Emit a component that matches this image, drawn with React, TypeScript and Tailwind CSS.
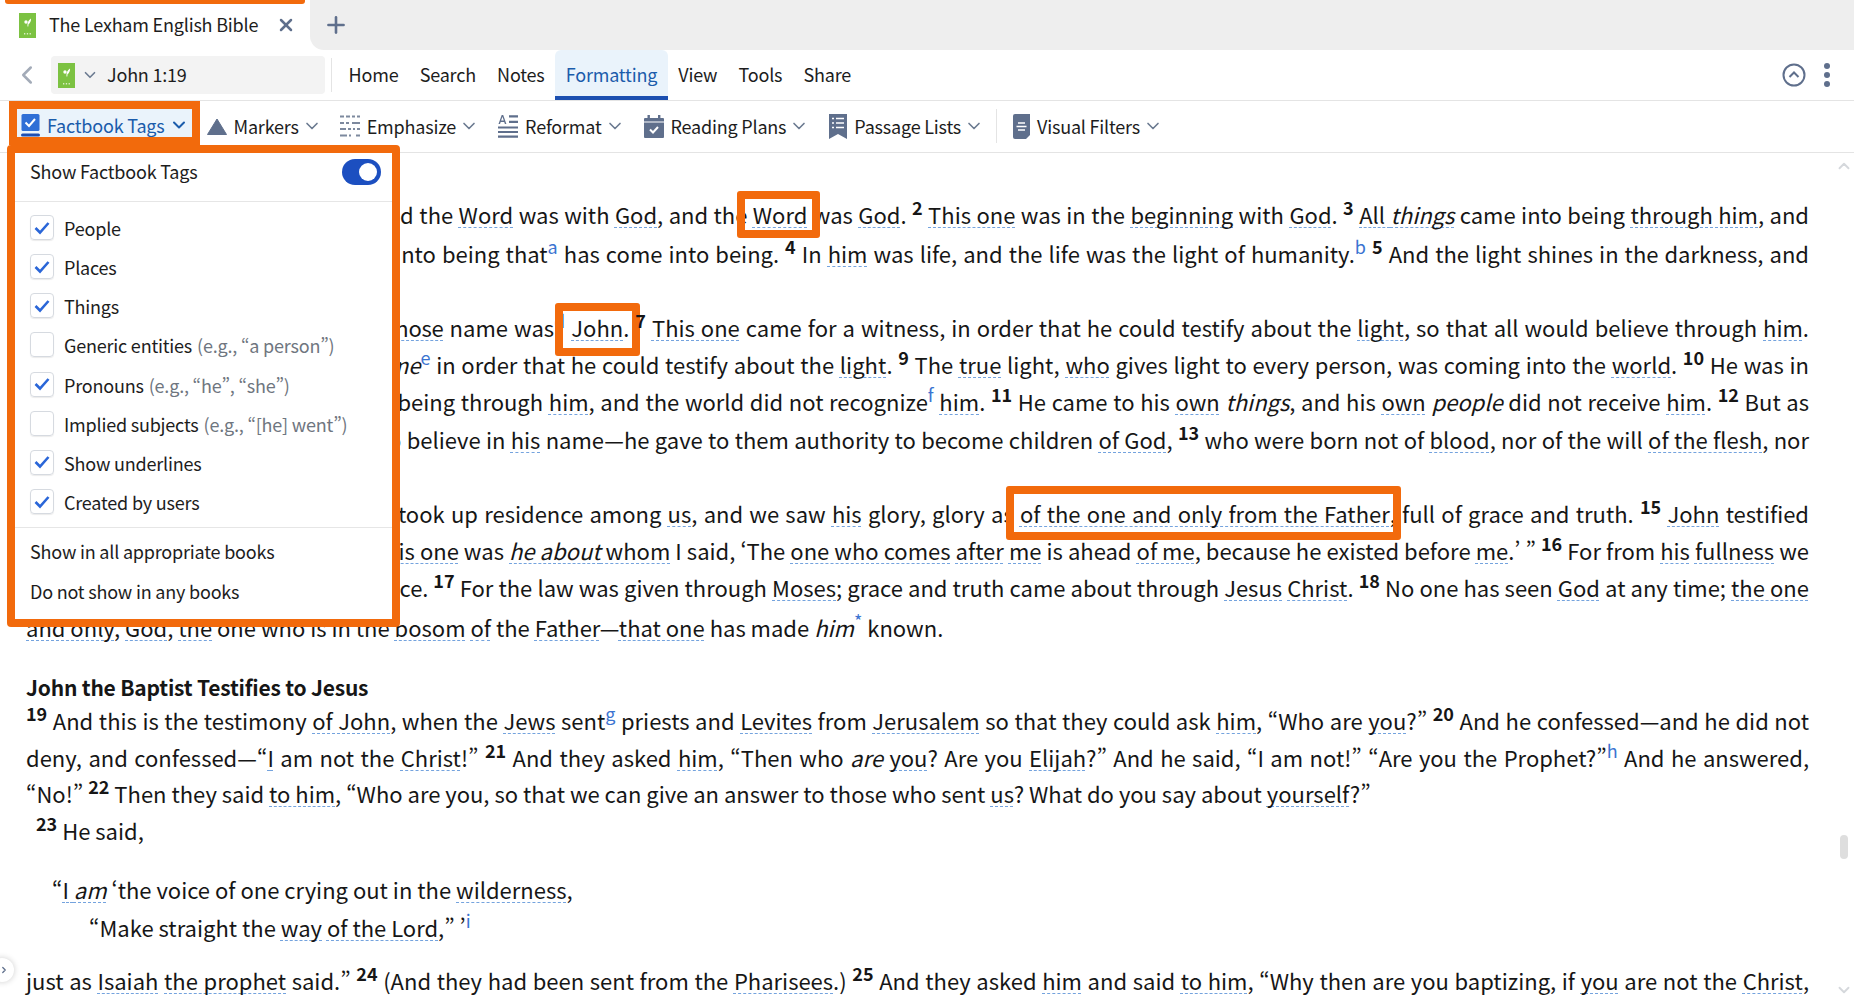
import type { ReactNode } from "react";
import { ChevronDown, ChevronLeft, ChevronRight, ChevronUp, Plus, X } from "lucide-react";

const ICON = "#5f6f8c";

// small markup for the bible text: {underlined} ^verse^ ~footnote~ *italic*
function rich(src: string): ReactNode[] {
  const parts = src.split(/(\{[^}]*\}|\^[^^]*\^|~[^~]*~|\*[^*]+\*)/);
  return parts.map((p, i) => {
    if (!p) return null;
    if (p[0] === "{")
      return (
        <span
          key={i}
          className="underline decoration-dashed decoration-1 decoration-[#74a3de] underline-offset-[3px] [text-decoration-skip-ink:none]"
        >
          {rich(p.slice(1, -1))}
        </span>
      );
    if (p[0] === "^")
      return (
        <sup key={i} className="text-[18px] font-bold tracking-normal">
          {p.slice(1, -1)}
        </sup>
      );
    if (p[0] === "~")
      return (
        <sup key={i} className="text-[18px] text-[#3b74d1]">
          {p.slice(1, -1)}
        </sup>
      );
    if (p[0] === "*" && p.length > 2) return <i key={i}>{p.slice(1, -1)}</i>;
    return p;
  });
}

function Line({ children, className = "" }: { children: ReactNode; className?: string }) {
  return (
    <div className={`h-[37px] leading-[37px] text-justify [text-align-last:justify] ${className}`}>{children}</div>
  );
}

function Plain({ children, className = "" }: { children: ReactNode; className?: string }) {
  return <div className={`h-[37px] leading-[37px] ${className}`}>{children}</div>;
}

// orange callout drawn around a phrase of the text
function Callout({ children, box }: { children: ReactNode; box: string }) {
  return (
    <span className="relative">
      {children}
      <span className={`absolute rounded-[3px] border-[8px] border-[#f26a0c] ${box}`} />
    </span>
  );
}

function Logo() {
  return (
    <svg width="17" height="25" viewBox="0 0 17 25">
      <rect width="17" height="25" fill="#7cc242" />
      <path d="M8.5 13.5c-.4-3.500.8-6.500 3.500-8 .3 2.500-.8 4.500-2.500 5.700l-.2 2.300z" fill="#fff" />
      <circle cx="7" cy="9" r="1.700" fill="#fff" />
      <path d="M5 20h1.300v1.600H5zM7.800 20h1.300v1.600H7.800zM10.600 20h1.300v1.600h-1.300z" fill="#d9efc5" />
    </svg>
  );
}

function FactbookIcon() {
  return (
    <svg width="19" height="23" viewBox="0 0 19 23">
      <rect x="0.5" width="18" height="17" rx="1.5" fill="#2f6fd6" />
      <path d="M4.500 8.500l3.500 3.500 6-7" fill="none" stroke="#fff" strokeWidth="2" />
      <rect y="19.500" width="19" height="3" rx="1.500" fill="#1d4fb4" />
    </svg>
  );
}

function MarkersIcon() {
  return (
    <svg width="20" height="17" viewBox="0 0 20 17">
      <path d="M10 1L19.500 16.500H.5z" fill={ICON} stroke={ICON} strokeLinejoin="round" />
    </svg>
  );
}

function EmphasizeIcon() {
  return (
    <svg width="20" height="22" viewBox="0 0 20 22" fill="none" stroke="#7d899e" strokeWidth="1.800">
      <path d="M0 1.500h4M6 1.500h4M12 1.500h3M17 1.500h3" />
      <path d="M0 8h4M6 8h3M12 8h8" />
      <path d="M0 14h6M8 14h3M13 14h2M17 14h3" />
      <path d="M0 20.500h7M9 20.500h2M16 20.500h4" />
    </svg>
  );
}

function ReformatIcon() {
  return (
    <svg width="20" height="23" viewBox="0 0 20 23">
      <path d="M.5 9L3.700 0h1.500l3.200 9H6.900l-.7-2.100H2.700L2 9zM3.100 5.600h2.700L4.450 1.800z" fill={ICON} />
      <path d="M11 1.300h9M11 6.800h9M0 12.500h20M0 17h20M0 21.700h20" stroke={ICON} strokeWidth="2.200" />
    </svg>
  );
}

function PlansIcon() {
  return (
    <svg width="20" height="23" viewBox="0 0 20 23">
      <rect y="3" width="20" height="20" rx="1" fill={ICON} />
      <rect x="3.500" width="2.400" height="5" fill={ICON} />
      <rect x="14" width="2.400" height="5" fill={ICON} />
      <rect y="6.500" width="20" height="1" fill="#fff" />
      <path d="M6 14.500l3 3 5-5.500" fill="none" stroke="#fff" strokeWidth="2" />
    </svg>
  );
}

function ListsIcon() {
  return (
    <svg width="18" height="25" viewBox="0 0 18 25">
      <path d="M0 0h18v25l-9-5-9 5z" fill={ICON} />
      <path d="M3 4.500h2M7 4.500h8M3 9h2M7 9h8M3 13.500h2M7 13.500h8" stroke="#fff" strokeWidth="1.400" />
    </svg>
  );
}

function FiltersIcon() {
  return (
    <svg width="17" height="25" viewBox="0 0 17 25">
      <path d="M2 0h15v21l-4 4H2a2 2 0 0 1-2-2V2a2 2 0 0 1 2-2z" fill={ICON} />
      <path d="M5 9h7M3.500 12.500h10M5 16h7" stroke="#fff" strokeWidth="1.500" />
    </svg>
  );
}

function ToolItem({ icon, label, className = "" }: { icon: ReactNode; label: string; className?: string }) {
  return (
    <div className={`flex items-center ${className}`}>
      {icon}
      <span className="ml-[7px]">{label}</span>
      <ChevronDown size={20} strokeWidth={2} className="ml-[3px] text-[#6b7a90]" />
    </div>
  );
}

function Check({ on, label, hint }: { on: boolean; label: string; hint?: string }) {
  return (
    <div className="flex h-[39.15px] items-center px-[15px]">
      <span className="flex h-[25px] w-[24px] items-center justify-center rounded-[4px] border border-[#d6dae0] shadow-[0_1px_1px_rgba(0,0,0,0.08)]">
        {on && (
          <svg width="16" height="14" viewBox="0 0 16 14">
            <path d="M1.500 7l4.500 4.500L14.500 2" fill="none" stroke="#2a66d8" strokeWidth="2.600" />
          </svg>
        )}
      </span>
      <span className="ml-[10px] translate-y-[1px]">{label}</span>
      {hint && <span className="ml-[5px] translate-y-[1px] text-[#6f7680]">{hint}</span>}
    </div>
  );
}

export default function App() {
  return (
    <div className="relative h-[1000px] w-[1854px] overflow-hidden bg-white font-['Noto_Sans_CJK_SC','Liberation_Sans',sans-serif] text-[18px] tracking-[-0.2px] text-[#1d1d1d] [font-variant-east-asian:proportional-width]">
      {/* tab strip */}
      <div className="flex h-[50px]">
        <div className="relative flex w-[310px] items-center pl-[19px]">
          <div className="absolute inset-x-[5px] top-0 h-[4px] rounded-b-[3px] bg-[#f26a0c]" />
          <Logo />
          <span className="ml-[13px] -translate-y-[1px]">The Lexham English Bible</span>
          <X size={20} strokeWidth={3} className="ml-[18px] text-[#5f6f8c]" />
        </div>
        <div className="flex flex-1 items-center rounded-bl-[14px] bg-[#eeeeee] pl-[13px]">
          <Plus size={26} strokeWidth={2.4} className="text-[#5f6f8c]" />
        </div>
      </div>

      {/* nav row */}
      <div className="flex h-[51px] items-center border-b border-[#e4e4e4] pl-[12px]">
        <ChevronLeft size={30} strokeWidth={2} className="text-[#a3abb8]" />
        <div className="ml-[9px] flex h-[38px] w-[274px] items-center rounded-[4px] bg-[#f3f3f3] pl-[7px]">
          <Logo />
          <ChevronDown size={18} strokeWidth={2.2} className="ml-[6px] text-[#6b7a90]" />
          <span className="ml-[8px] -translate-y-[1px]">John 1:19</span>
        </div>
        <div className="ml-[6px] h-[34px] w-px bg-[#e4e4e4]" />
        <nav className="ml-[6px] flex h-full">
          <span className="flex items-center px-[10.6px] pb-[2px]">Home</span>
          <span className="flex items-center px-[10.6px] pb-[2px]">Search</span>
          <span className="flex items-center px-[10.6px] pb-[2px]">Notes</span>
          <span className="flex items-center rounded-t-[6px] border-b-[4px] border-[#1c4fb0] bg-[#eaf3fb] px-[10.6px] pt-[2px] text-[#1b5cab]">
            Formatting
          </span>
          <span className="flex items-center px-[10.6px] pb-[2px]">View</span>
          <span className="flex items-center px-[10.6px] pb-[2px]">Tools</span>
          <span className="flex items-center px-[10.6px] pb-[2px]">Share</span>
        </nav>
        <div className="ml-auto flex items-center pr-[23px]">
          <svg width="24" height="24" viewBox="0 0 24 24" fill="none" stroke={ICON} strokeWidth="2">
            <circle cx="12" cy="12" r="10.5" />
            <path d="M7.500 14l4.500-4.500 4.500 4.500" />
          </svg>
          <svg width="8" height="26" viewBox="0 0 8 26" className="ml-[17px]" fill={ICON}>
            <circle cx="4" cy="4" r="3" />
            <circle cx="4" cy="13" r="3" />
            <circle cx="4" cy="22" r="3" />
          </svg>
        </div>
      </div>

      {/* formatting toolbar */}
      <div className="flex h-[52px] items-start border-b border-[#e4e4e4] pl-[9px]">
        <div className="flex h-[44px] items-center border-[8px] border-[#f26a0c] bg-[#eaf3fb] pl-[4px] pr-[3px] pt-[4px] text-[#1b5cab]">
          <FactbookIcon />
          <span className="ml-[7px]">Factbook Tags</span>
          <ChevronDown size={20} strokeWidth={2.4} className="ml-[4px]" />
        </div>
        <div className="flex h-[50px] items-center">
          <ToolItem icon={<MarkersIcon />} label="Markers" className="ml-[7px]" />
          <ToolItem icon={<EmphasizeIcon />} label="Emphasize" className="ml-[18px]" />
          <ToolItem icon={<ReformatIcon />} label="Reformat" className="ml-[19px]" />
          <ToolItem icon={<PlansIcon />} label="Reading Plans" className="ml-[19px]" />
          <ToolItem icon={<ListsIcon />} label="Passage Lists" className="ml-[20px]" />
          <div className="ml-[12px] h-[34px] w-px bg-[#e4e4e4]" />
          <ToolItem icon={<FiltersIcon />} label="Visual Filters" className="ml-[16px]" />
        </div>
      </div>

      {/* bible text, the part behind the menu gets a little tracking so the visible words land right */}
      <div className="pl-[26px] pr-[45px] pt-[43px] text-[22px] tracking-normal text-[#161616]">
        <Line>
          <span className="tracking-[0.25px]">{rich("^1^ In the beginning was the {Word}, and")}</span>
          {rich(" the {Word} was with {God}, and the ")}
          <Callout box="-left-[16px] -right-[13px] -top-[7px] -bottom-[8px]">{rich("{Word}")}</Callout>
          {rich(" was {God}. ^2^ {This one} was in the {beginning} with {God}. ^3^ {All *things*} came into being {through him}, and")}
        </Line>
        <Line className="mt-[2px]">
          {rich("apart from him not one thing came into being that~a~ has come into being. ^4^ In {him} was life, and the life was the light of humanity.~b~ ^5^ And the light shines in the darkness, and")}
        </Line>
        <Plain>{rich("the darkness did not overcome it.~c~")}</Plain>
        <Line>
          <span className="tracking-[-0.2px]">{rich("^6^ There was a man sent from God, {whose}")}</span>
          {rich(" name was~d~ ")}
          <Callout box="-left-[16px] -right-[11px] -top-[8px] -bottom-[13px]">{rich("{John}.")}</Callout>
          {rich(" ^7^ {This one} came for a witness, in order that he could testify about the {light}, so that all would believe through {him}.")}
        </Line>
        <Line>
          {rich("^8^ That one was not the light, but *came*~e~ in order that he could testify about the {light}. ^9^ The {true} light, {who} gives light to every person, was coming into the {world}. ^10^ He was in")}
        </Line>
        <Line>
          <span className="tracking-[0.1px]">{rich("the world, and the world came into")}</span>
          {rich(" being through {him}, and the world did not recognize~f~ {him}. ^11^ He came to his {own} *things*, and his {own} *people* did not receive {him}. ^12^ But as")}
        </Line>
        <Line className="mt-px">
          {rich("many as received him—to those who believe in {his} name—he gave to them authority to become children {of God}, ^13^ who were born not of {blood}, nor of the will {of the flesh}, nor")}
        </Line>
        <Line className="mt-[37px]">
          <span className="tracking-[0.25px]">{rich("^14^ And the {Word} became flesh and")}</span>
          {rich(" took up residence among {us}, and we saw {his} glory, glory as ")}
          <Callout box="-left-[14px] -right-[11px] -top-[11px] -bottom-[11px]">{rich("{of the one and only from the Father}")}</Callout>
          {rich(", full of grace and truth. ^15^ {John} testified")}
        </Line>
        <Line>
          {rich("about {him} and cried out, saying, “{This one} was {*he about* whom} I said, ‘The {one who comes} {after} {me} is ahead {of me}, because he existed before {me}.’ ” ^16^ For from {his} {fullness} we")}
        </Line>
        <Line>
          <span className="tracking-[-0.15px]">{rich("have all received, and grace upon grace.")}</span>
          {rich(" ^17^ For the law was given through {Moses}; grace and truth came about through {Jesus} {Christ}. ^18^ No one has seen {God} at any time; {the one}")}
        </Line>
        <Plain className="mt-[3px]">
          {rich("{and only}, {God}, {the} one who is in the {bosom} {of} the {Father}—{that one} has made *him*~*~ known.")}
        </Plain>

        <div className="mt-[23px] h-[37px] text-[21px] font-bold leading-[37px] tracking-[-0.2px]">John the Baptist Testifies to Jesus</div>
        <Line className="-mt-[4px]">
          {rich("^19^ And this is the testimony {of John}, when the {Jews} sent~g~ priests and {Levites} from {Jerusalem} so that they could ask {him}, “Who are {you}?” ^20^ And he confessed—and he did not")}
        </Line>
        <Line>
          {rich("deny, and confessed—“{I} am not the {Christ}!” ^21^ And they asked {him}, “Then who *are* {you}? Are you {Elijah}?” And he said, “I am not!” “Are you the Prophet?”~h~ And he answered,")}
        </Line>
        <Plain className="-mt-px">
          {rich("“No!” ^22^ Then they said {to him}, “Who are you, so that we can give an answer to those who sent {us}? What do you say about {yourself}?”")}
        </Plain>
        <Plain className="pl-[10px]">{rich("^23^ He said,")}</Plain>
        <Plain className="mt-[22px] pl-[26px]">
          {rich("“{I *am*} ‘the voice of one crying out in the {wilderness},")}
        </Plain>
        <Plain className="mt-px pl-[63px]">{rich("“Make straight the {way} {of the Lord},” ’~i~")}</Plain>
        <Line className="mt-[16px]">
          {rich("just as {Isaiah} {the prophet} said.” ^24^ (And they had been sent from the {Pharisees}.) ^25^ And they asked {him} and said {to him}, “Why then are you baptizing, if {you} are not the {Christ},")}
        </Line>
      </div>

      {/* factbook tags menu */}
      <div className="absolute left-[7px] top-[145px] w-[393px] rounded-[4px] border-[8px] border-[#f26a0c] bg-white">
        <div className="flex h-[49px] items-center justify-between border-b border-[#e6e6e6] pl-[15px] pr-[11px] pb-[10px]">
          <span className="-translate-y-[1px]">Show Factbook Tags</span>
          <span className="flex h-[26px] w-[39px] items-center justify-end rounded-full bg-[#1c4fc0] pr-[4px]">
            <span className="h-[18px] w-[18px] rounded-full bg-white" />
          </span>
        </div>
        <div className="border-b border-[#e6e6e6] pb-[6px] pt-[6px]">
          <Check on label="People" />
          <Check on label="Places" />
          <Check on label="Things" />
          <Check on={false} label="Generic entities" hint="(e.g., “a person”)" />
          <Check on label="Pronouns" hint="(e.g., “he”, “she”)" />
          <Check on={false} label="Implied subjects" hint="(e.g., “[he] went”)" />
          <Check on label="Show underlines" />
          <Check on label="Created by users" />
        </div>
        <div className="pb-[8px] pt-[4px]">
          <div className="flex h-[39.5px] items-center px-[15px]">Show in all appropriate books</div>
          <div className="flex h-[39.5px] items-center px-[15px]">Do not show in any books</div>
        </div>
      </div>

      {/* scrollbar */}
      <ChevronUp size={18} strokeWidth={2.5} className="absolute left-[1835px] top-[157px] text-[#d5d8dc]" />
      <div className="absolute left-[1840px] top-[835px] h-[24px] w-[8px] rounded-full bg-[#dedede]" />
      <ChevronDown size={18} strokeWidth={2.5} className="absolute left-[1835px] top-[981px] text-[#d5d8dc]" />

      {/* collapsed side panel handle */}
      <div className="absolute -left-[10px] top-[958px] flex h-[24px] w-[24px] items-center justify-end rounded-full bg-white pr-[5px] shadow-[0_0_6px_rgba(0,0,0,0.2)]">
        <ChevronRight size={10} strokeWidth={3} className="text-[#5f6f8c]" />
      </div>
    </div>
  );
}
